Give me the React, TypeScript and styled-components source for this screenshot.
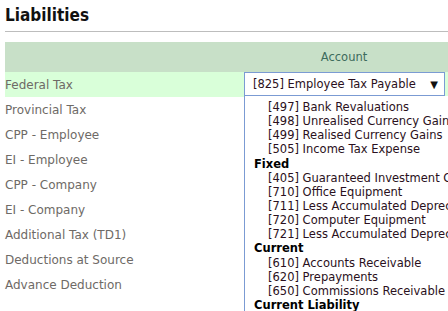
import React from 'react';
import styled, { createGlobalStyle } from 'styled-components';

const Global = createGlobalStyle`
  html, body { margin: 0; padding: 0; background: #fff; overflow: hidden; }
  body { font-family: "DejaVu Sans", Verdana, sans-serif; }
`;

const Page = styled.div`
  width: 448px;
  height: 311px;
  padding: 0 0 0 5px;
  box-sizing: border-box;
  overflow: hidden;
`;

const Title = styled.h2`
  margin: 0;
  padding-top: 4px;
  height: 27px;
  font-family: "DejaVu Sans Condensed", "DejaVu Sans", sans-serif;
  font-size: 17px;
  font-weight: bold;
  color: #111;
  line-height: 22px;
`;

const Rule = styled.div`
  height: 1px;
  background: #bdbdbd;
  margin-bottom: 10px;
`;

const Table = styled.div`
  display: grid;
  grid-template-columns: 235px 1fr;
`;

const HeadCell = styled.div`
  height: 30px;
  background: #c8e0c8;
  color: #3d6b5c;
  font-size: 11.5px;
  display: flex;
  align-items: center;
  justify-content: center;
`;

const Label = styled.div<{ $active?: boolean }>`
  height: 25px;
  display: flex;
  align-items: center;
  font-size: 12px;
  color: #6e6a66;
  background: ${p => (p.$active ? '#d9ffd9' : 'transparent')};
`;

const Field = styled.div<{ $active?: boolean }>`
  height: 25px;
  position: relative;
  padding: 0 0 0 4px;
  background: ${p => (p.$active ? '#d9ffd9' : 'transparent')};
`;

const Select = styled.div`
  height: 24px;
  width: 201px;
  box-sizing: border-box;
  border: 1px solid #7b9bd3;
  background: #fff;
  display: flex;
  align-items: center;
  justify-content: space-between;
  padding: 0 6px 0 8px;
  font-size: 11.5px;
  color: #2a1020;
`;

const Arrow = styled.span`
  font-size: 10px;
  color: #111;
`;

const List = styled.div`
  position: absolute;
  left: 4px;
  top: 24px;
  width: 230px;
  background: #fff;
  border-left: 1px solid #7b9bd3;
  padding-top: 4px;
  z-index: 2;
`;

const Group = styled.div`
  font-size: 11.5px;
  font-weight: bold;
  color: #000;
  height: 14.15px;
  line-height: 14px;
  padding-left: 9px;
  white-space: nowrap;
`;

const Option = styled.div`
  font-size: 11.5px;
  color: #2a1020;
  height: 14.15px;
  line-height: 14px;
  padding-left: 23px;
  white-space: nowrap;
`;

type Item = { group?: string; code?: string; name?: string };

const items: Item[] = [
  { code: '497', name: 'Bank Revaluations' },
  { code: '498', name: 'Unrealised Currency Gains' },
  { code: '499', name: 'Realised Currency Gains' },
  { code: '505', name: 'Income Tax Expense' },
  { group: 'Fixed' },
  { code: '405', name: 'Guaranteed Investment Certificates' },
  { code: '710', name: 'Office Equipment' },
  { code: '711', name: 'Less Accumulated Depreciation' },
  { code: '720', name: 'Computer Equipment' },
  { code: '721', name: 'Less Accumulated Depreciation' },
  { group: 'Current' },
  { code: '610', name: 'Accounts Receivable' },
  { code: '620', name: 'Prepayments' },
  { code: '650', name: 'Commissions Receivable' },
  { group: 'Current Liability' },
  { code: '800', name: 'Accounts Payable' },
];

const labels = [
  'Federal Tax',
  'Provincial Tax',
  'CPP - Employee',
  'EI - Employee',
  'CPP - Company',
  'EI - Company',
  'Additional Tax (TD1)',
  'Deductions at Source',
  'Advance Deduction',
];

export default function App() {
  return (
    <Page>
      <Global />
      <Title>Liabilities</Title>
      <Rule />
      <Table>
        <HeadCell />
        <HeadCell>Account</HeadCell>
        {labels.map((l, i) => (
          <React.Fragment key={l}>
            <Label $active={i === 0}>{l}</Label>
            <Field $active={i === 0}>
              {i === 0 && (
                <>
                  <Select>
                    <span>[825] Employee Tax Payable</span>
                    <Arrow>▼</Arrow>
                  </Select>
                  <List>
                    {items.map((it, j) =>
                      it.group ? (
                        <Group key={j}>{it.group}</Group>
                      ) : (
                        <Option key={j}>[{it.code}] {it.name}</Option>
                      )
                    )}
                  </List>
                </>
              )}
            </Field>
          </React.Fragment>
        ))}
      </Table>
    </Page>
  );
}
